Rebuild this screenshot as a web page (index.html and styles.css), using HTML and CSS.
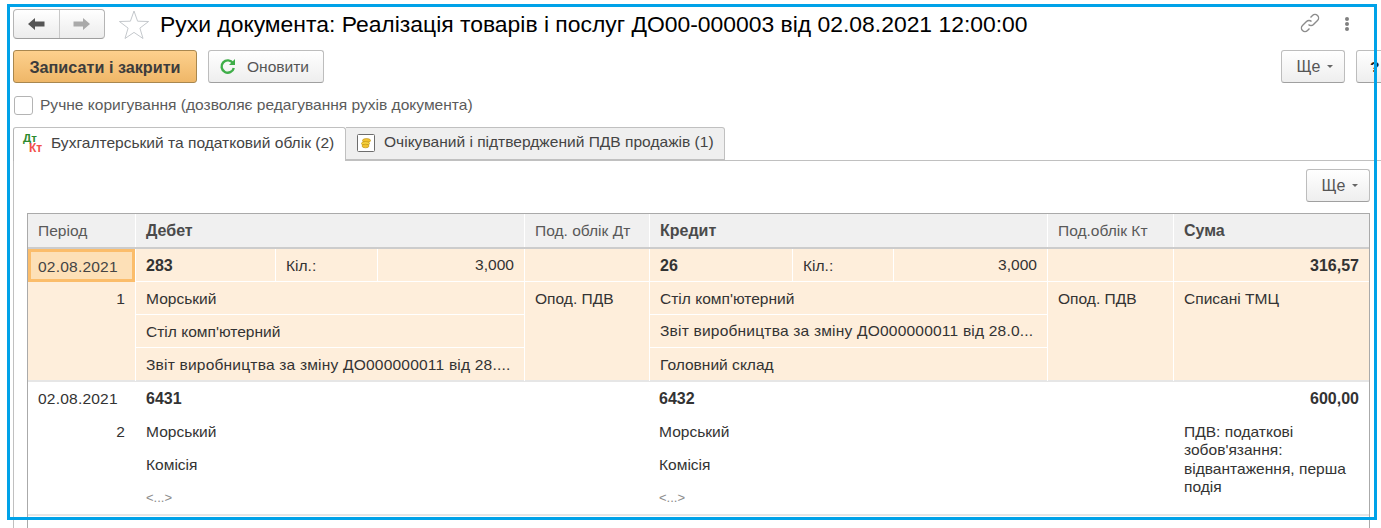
FILE: index.html
```html
<!DOCTYPE html>
<html lang="uk">
<head>
<meta charset="utf-8">
<title>Рухи документа</title>
<link rel="stylesheet" href="styles.css">
</head>
<body>
<div class="page">
  <header class="titlebar">
    <div class="nav">
      <button class="nav-btn"><svg width="18" height="14" viewBox="0 0 18 14"><path d="M8 1 1 7l7 6V9.500h9.500v-5H8z" fill="#555"/></svg></button>
      <button class="nav-btn"><svg width="18" height="14" viewBox="0 0 18 14"><path d="M10 1l7 6-7 6V9.500H.5v-5H10z" fill="#aaa"/></svg></button>
    </div>
    <svg class="star" width="32" height="30" viewBox="0 0 32 30"><path d="M16 2l3.600 10.200 11 .3-8.700 6.600 3.100 10.400L16 23.400 7 29.500l3.100-10.400-8.700-6.600 11-.3z" fill="#fff" stroke="#c4c8cc" stroke-width="1"/></svg>
    <h1 class="title">Рухи документа: Реалізація товарів і послуг ДО00-000003 від 02.08.2021 12:00:00</h1>
    <svg class="link" width="22" height="22" viewBox="0 0 22 22" fill="none" stroke="#8c8c8c" stroke-width="1.400"><path d="M9.500 12.500a3.500 3.500 0 0 0 5 0l4-4a3.500 3.500 0 0 0-5-5l-2 2"/><path d="M12.500 9.500a3.500 3.500 0 0 0-5 0l-4 4a3.500 3.500 0 0 0 5 5l2-2"/></svg>
    <div class="dots"><i></i><i></i><i></i></div>
  </header>

  <div class="toolbar">
    <button class="btn primary">Записати і закрити</button>
    <button class="btn refresh"><svg width="17" height="17" viewBox="0 0 17 17" fill="none"><path d="M14 5.200A6.200 6.200 0 1 0 14.800 10" stroke="#3fae49" stroke-width="2.400"/><path d="M16 1v6h-6z" fill="#3fae49"/></svg>Оновити</button>
    <button class="btn more top-more">Ще <span class="caret"></span></button>
    <button class="btn help">?</button>
  </div>

  <label class="manual"><span class="checkbox"></span>Ручне коригування (дозволяє редагування рухів документа)</label>

  <div class="tabs">
    <div class="tab active">
      <span class="dtkt"><b class="dt">Дт</b><b class="kt">Кт</b></span>
      Бухгалтерський та податковий облік (2)
    </div>
    <div class="tab">
      <svg class="coins" width="18" height="18" viewBox="0 0 18 18"><rect x=".5" y=".5" width="17" height="17" rx="1" fill="#fff" stroke="#6d6d6d"/><ellipse cx="9.500" cy="6.500" rx="4" ry="2" fill="#f2c230" stroke="#b98f10" stroke-width=".6"/><ellipse cx="8.500" cy="9.500" rx="4" ry="2" fill="#f6d23f" stroke="#b98f10" stroke-width=".6"/><ellipse cx="8.500" cy="12" rx="3.500" ry="1.800" fill="#f2c230" stroke="#b98f10" stroke-width=".6"/></svg>
      Очікуваний і підтверджений ПДВ продажів (1)
    </div>
  </div>

  <section class="panel">
    <div class="panel-bar"><button class="btn more">Ще <span class="caret"></span></button></div>
    <div class="table">
      <div class="thead">
        <div>Період</div>
        <div class="strong">Дебет</div>
        <div>Под. облік Дт</div>
        <div class="strong">Кредит</div>
        <div>Под.облік Кт</div>
        <div class="strong">Сума</div>
      </div>

      <div class="row selected">
        <div class="col">
          <div class="cell current date">02.08.2021</div>
          <div class="cell right">1</div>
        </div>
        <div class="col">
          <div class="qty qty-d"><div class="cell strong">283</div><div class="cell">Кіл.:</div><div class="cell right">3,000</div></div>
          <div class="cell">Морський</div>
          <div class="cell">Стіл комп'ютерний</div>
          <div class="cell clip">Звіт виробництва за зміну ДО000000011 від 28....</div>
        </div>
        <div class="col">
          <div class="cell"></div>
          <div class="cell">Опод. ПДВ</div>
        </div>
        <div class="col">
          <div class="qty qty-k"><div class="cell strong">26</div><div class="cell">Кіл.:</div><div class="cell right">3,000</div></div>
          <div class="cell">Стіл комп'ютерний</div>
          <div class="cell clip">Звіт виробництва за зміну ДО000000011 від 28.0...</div>
          <div class="cell">Головний склад</div>
        </div>
        <div class="col">
          <div class="cell"></div>
          <div class="cell">Опод. ПДВ</div>
        </div>
        <div class="col">
          <div class="cell right strong">316,57</div>
          <div class="cell">Списані ТМЦ</div>
        </div>
      </div>

      <div class="row plain">
        <div class="col">
          <div class="cell date">02.08.2021</div>
          <div class="cell right">2</div>
        </div>
        <div class="col">
          <div class="cell strong">6431</div>
          <div class="cell">Морський</div>
          <div class="cell">Комісія</div>
          <div class="cell empty">&lt;...&gt;</div>
        </div>
        <div class="col"></div>
        <div class="col">
          <div class="cell strong">6432</div>
          <div class="cell">Морський</div>
          <div class="cell">Комісія</div>
          <div class="cell empty">&lt;...&gt;</div>
        </div>
        <div class="col"></div>
        <div class="col">
          <div class="cell right strong">600,00</div>
          <div class="wrap">ПДВ: податкові зобов'язання: відвантаження, перша подія</div>
        </div>
      </div>
    </div>
  </section>
</div>
<div class="frame"></div>
</body>
</html>
```

FILE: styles.css
```css
* { box-sizing: border-box; }
html, body { margin: 0; height: 528px; overflow: hidden; background: #fff; }
body { font: 15.550px/16px "Liberation Sans", Arial, sans-serif; color: #333; position: relative; }
button { font: inherit; color: inherit; margin: 0; }

.page { width: 1440px; padding: 9px 0 0 13px; }

.titlebar { display: flex; align-items: center; height: 30px; width: 1336px; }
.nav { display: flex; width: 92px; height: 30px; border: 1px solid #b5b5b5; border-radius: 4px; border-bottom-color: #9e9e9e; overflow: hidden; background: linear-gradient(#fff, #ececec); }
.nav-btn { flex: 1; border: 0; background: none; padding: 0; display: flex; align-items: center; justify-content: center; }
.nav-btn + .nav-btn { border-left: 1px solid #c8c8c8; }
.star { margin-left: 13px; margin-right: 10px; }
.title { margin: 0; font-size: 22.900px; line-height: 30px; font-weight: 400; color: #000; white-space: nowrap; flex: 1; }
.link { margin-right: 24px; margin-top: -2px; }
.dots { width: 4px; display: flex; flex-direction: column; gap: 1px; }
.dots i { width: 4px; height: 4px; border-radius: 50%; background: #808080; }

.toolbar { display: flex; height: 33px; margin-top: 11px; gap: 11px; width: 1407px; }
.btn { flex: none; height: 33px; padding: 0; border: 1px solid #bdbdbd; border-bottom-color: #a0a0a0; border-radius: 3px; background: linear-gradient(#fff, #eeeeee); color: #555; display: flex; align-items: center; justify-content: center; white-space: nowrap; }
.primary { width: 184px; background: linear-gradient(#fdd08d, #efb768); border-color: #a8874f; color: #3c3c3c; font-weight: 700; font-size: 16.200px; }
.refresh { width: 116px; gap: 11px; padding-right: 4px; }
.more { width: 64px; font-size: 16px; gap: 7px; padding-left: 4px; }
.top-more { margin-left: auto; }
.help { width: 64px; justify-content: flex-start; padding-left: 13px; color: #222; font-weight: 700; }
.caret { width: 0; height: 0; border-left: 3px solid transparent; border-right: 3px solid transparent; border-top: 3px solid #666; }

.manual { display: flex; align-items: center; gap: 7px; height: 20px; margin-top: 12px; padding-left: 1px; color: #5b5b5b; }
.checkbox { width: 19px; height: 19px; border: 1px solid #b4b4b4; border-radius: 3px; background: #fff; }

.tabs { display: flex; margin-top: 12px; height: 34px; position: relative; z-index: 1; }
.tab { height: 33px; padding: 0 10px 3px 11px; display: flex; align-items: center; border: 1px solid #c0c0c0; border-left: 0; background: #efefef; color: #444; border-radius: 0 3px 0 0; white-space: nowrap; }
.tab.active { width: 333px; height: 34px; padding: 0 0 3px 9px; border-left: 1px solid #b5b5b5; border-bottom: 0; background: #fff; border-radius: 3px 3px 0 0; }
.dtkt { width: 20px; height: 20px; margin-right: 8px; position: relative; line-height: 9px; margin-top: 1px; }
.dt { position: absolute; left: 0; top: 0; color: #2e8b2e; font-size: 11.500px; }
.kt { position: absolute; left: 6px; top: 10px; color: #f2504b; font-size: 12px; }
.coins { margin-right: 9px; margin-top: 2px; }

.panel { border-left: 1px solid #c0c0c0; border-top: 1px solid #c0c0c0; margin-top: -1px; padding: 0 0 0 13px; }
.panel-bar { display: flex; justify-content: flex-end; width: 1343px; height: 52px; padding-top: 8px; }

.table { width: 1343px; height: 322px; border: 1px solid #aaa; border-width: 1px 1px 0; }
.thead, .row { display: grid; grid-template-columns: 107px 389px 125px 398px 126px 1fr; }
.thead { height: 35px; background: #f0f0f0; border-bottom: 2px solid #ccc; color: #595959; }
.thead > div { padding: 0 10px; display: flex; align-items: center; border-left: 1px solid #fff; }
.thead > div:first-child { border-left: 0; }
.thead .strong { color: #4a4a4a; }
.strong { font-weight: 700; font-size: 16px; }

.row { height: 134px; border-bottom: 2px solid #e6e6e6; }
.selected { background: #feeedb; height: 133px; }
.col { min-width: 0; border-left: 1px solid transparent; }
.selected .col { border-left-color: #fff; }
.col:first-child, .selected .col:first-child { border-left: 0; }
.cell { height: 33px; padding: 0 10px; display: flex; align-items: center; min-width: 0; }
.right { justify-content: flex-end; }
.selected .cell { border-bottom: 1px solid #fff; padding-top: 2px; }
.selected .col .cell:last-child { border-bottom: 0; padding-top: 0; }
.current { background: #fde0b7; border: 3px solid #fbbd6b !important; padding: 0 7px; color: #444; }
.selected .col:first-child .cell { border-bottom: 0; }
.date { letter-spacing: .2px; }
.qty { display: grid; height: 33px; border-bottom: 1px solid #fff; }
.qty-d { grid-template-columns: 139px 102px 1fr; }
.qty-k { grid-template-columns: 142px 101px 1fr; }
.qty .cell { height: 32px; border-bottom: 0; }
.qty .cell + .cell { border-left: 1px solid #fff; }
.clip { white-space: nowrap; overflow: hidden; letter-spacing: .19px; }
.selected .clip { padding-top: 0; }
.empty { color: #8c8c8c; font-size: 13px; }
.plain .col:nth-child(4) .cell { padding-left: 9px; }
.wrap { padding: 8px 10px 0; line-height: 18.300px; }

.frame { position: absolute; left: 7px; top: 4px; width: 1370px; height: 516px; border: 3px solid #00a2e8; pointer-events: none; z-index: 5; }
```
